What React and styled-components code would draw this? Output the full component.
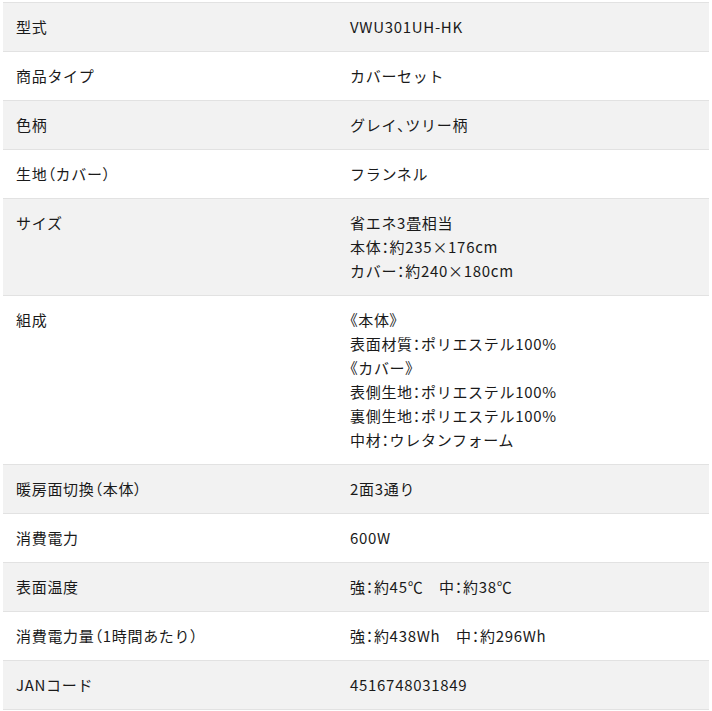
import React from "react";
import styled, { createGlobalStyle } from "styled-components";

const Global = createGlobalStyle`
  html, body { margin: 0; padding: 0; background: #fff; }
  body { font-family: "Noto Sans CJK JP", "Noto Sans", sans-serif; color: #1a1a1a; }
`;

const Wrap = styled.div`
  padding: 2px 3px 0 3px;
`;

const Table = styled.table`
  width: 706px;
  border-collapse: collapse;
  font-size: 15px;
  line-height: 24px;
  letter-spacing: 0.7px;
`;

const Row = styled.tr`
  background: ${(p) => (p.$shaded ? "#f2f2f2" : "#fff")};
  border-top: 1px solid #e2e2e2;
  border-bottom: 1px solid #e2e2e2;
`;

const Head = styled.th`
  width: 308px;
  text-align: left;
  font-weight: 400;
  vertical-align: top;
  padding: 12px 13px;
`;

const Cell = styled.td`
  vertical-align: top;
  padding: 12px 13px;
`;

const Line = styled.div``;

const Punct = styled.span`
  font-feature-settings: "palt";
`;

function Text({ children }) {
  const parts = children.split(/([、：（）《》])/).filter(Boolean);
  return parts.map((p, i) =>
    /^[、：（）《》]$/.test(p) ? <Punct key={i}>{p}</Punct> : <React.Fragment key={i}>{p}</React.Fragment>
  );
}

const rows = [
  ["型式", ["VWU301UH-HK"]],
  ["商品タイプ", ["カバーセット"]],
  ["色柄", ["グレイ、ツリー柄"]],
  ["生地（カバー）", ["フランネル"]],
  ["サイズ", ["省エネ3畳相当", "本体：約235×176cm", "カバー：約240×180cm"]],
  [
    "組成",
    [
      "《本体》",
      "表面材質：ポリエステル100%",
      "《カバー》",
      "表側生地：ポリエステル100%",
      "裏側生地：ポリエステル100%",
      "中材：ウレタンフォーム",
    ],
  ],
  ["暖房面切換（本体）", ["2面3通り"]],
  ["消費電力", ["600W"]],
  ["表面温度", ["強：約45℃　中：約38℃"]],
  ["消費電力量（1時間あたり）", ["強：約438Wh　中：約296Wh"]],
  ["JANコード", ["4516748031849"]],
];

export default function App() {
  return (
    <Wrap>
      <Global />
      <Table>
        <tbody>
          {rows.map(([k, v], i) => (
            <Row key={k} $shaded={i % 2 === 0}>
              <Head>
                <Text>{k}</Text>
              </Head>
              <Cell>
                {v.map((l, j) => (
                  <Line key={j}>
                    <Text>{l}</Text>
                  </Line>
                ))}
              </Cell>
            </Row>
          ))}
        </tbody>
      </Table>
    </Wrap>
  );
}
